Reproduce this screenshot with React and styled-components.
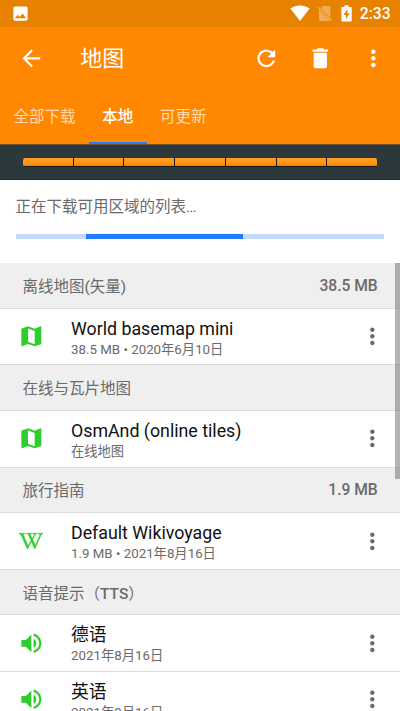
import React from 'react';
import styled, { createGlobalStyle } from 'styled-components';
import {
  MdArrowBack,
  MdDelete,
  MdImage,
  MdMap,
  MdMoreVert,
  MdRefresh,
  MdVolumeUp,
} from 'react-icons/md';
import { FaWikipediaW } from 'react-icons/fa';

const colors = {
  statusBar: '#e68200',
  primary: '#ff8800',
  accent: '#237bff',
  accentLight: '#c4daff',
  dark: '#2d383d',
  header: '#efefef',
  divider: '#dadada',
  text: '#111111',
  textSecondary: '#6a6a6a',
  green: '#2fce2f',
};

const GlobalStyle = createGlobalStyle`
  * {
    box-sizing: border-box;
  }

  body {
    margin: 0;
    overflow: hidden;
    background: #ffffff;
    font-family: Roboto, 'Noto Sans CJK SC', sans-serif;
  }

  svg {
    display: block;
    flex-shrink: 0;
  }
`;

const Screen = styled.div`
  width: 400px;
  height: 711px;
  display: flex;
  flex-direction: column;
  overflow: hidden;
  background: #ffffff;
`;

const StatusBar = styled.div`
  height: 27px;
  flex-shrink: 0;
  display: flex;
  align-items: center;
  justify-content: space-between;
  padding: 0 9.5px 0 10.5px;
  background: ${colors.statusBar};
  color: #ffffff;
`;

const StatusIcons = styled.div`
  display: flex;
  align-items: center;
`;

const StatusGap = styled.span`
  width: ${props => (props.$wide ? '9px' : '7px')};
`;

const Clock = styled.span`
  margin-left: 8px;
  padding-top: 1px;
  font-size: 15.6px;
  font-weight: 500;
  line-height: 26px;
`;

const Toolbar = styled.header`
  height: 62px;
  flex-shrink: 0;
  display: flex;
  align-items: center;
  padding: 0 13.4px 0 17.6px;
  background: ${colors.primary};
  color: #ffffff;
`;

const Title = styled.h1`
  flex: 1;
  margin: 0 0 0 36px;
  padding-top: 1px;
  font-size: 22px;
  font-weight: 400;
  line-height: 30px;
`;

const Actions = styled.div`
  display: flex;
  align-items: center;
  gap: 26.6px;
`;

const Tabs = styled.nav`
  height: 55px;
  flex-shrink: 0;
  display: flex;
  background: ${colors.primary};
`;

const Tab = styled.div`
  display: flex;
  align-items: center;
  justify-content: center;
  padding: 0 13.4px 1px;
  border-bottom: 2px solid ${props => (props.$active ? colors.accent : 'transparent')};
  color: ${props => (props.$active ? '#ffffff' : 'rgba(255, 255, 255, 0.7)')};
  font-size: 15.5px;
  font-weight: ${props => (props.$active ? 500 : 400)};
`;

const MemoryBar = styled.div`
  height: 36px;
  flex-shrink: 0;
  display: flex;
  align-items: center;
  padding: 0 23px;
  background: ${colors.dark};
  border-top: 1px solid #6a5030;
  border-bottom: 1px solid #20282c;
`;

const MemoryTrack = styled.div`
  flex: 1;
  height: 9px;
  display: flex;
  gap: 1px;
  overflow: hidden;
  border-radius: 2px;
  background: #15191b;
`;

const MemorySegment = styled.div`
  flex: 1;
  height: 8px;
  background: linear-gradient(#ff9e22, #ff8f0e 85%, #d07a12);
`;

const Download = styled.section`
  height: 83.2px;
  flex-shrink: 0;
  display: flex;
  flex-direction: column;
  padding: 15px 15.6px 0;
`;

const DownloadText = styled.div`
  color: ${colors.textSecondary};
  font-size: 15.5px;
  line-height: 24px;
`;

const Progress = styled.div`
  height: 5px;
  margin-top: 15px;
  padding-left: 70.4px;
  background: ${colors.accentLight};
`;

const ProgressValue = styled.div`
  width: 157px;
  height: 5px;
  background: ${colors.accent};
`;

const List = styled.main`
  position: relative;
  flex: 1;
  min-height: 0;
  overflow: hidden;
`;

const ScrollThumb = styled.div`
  position: absolute;
  top: 0;
  right: 0;
  width: 5px;
  height: 216px;
  background: rgba(90, 90, 90, 0.45);
`;

const SectionHeader = styled.div`
  height: 45.5px;
  display: flex;
  align-items: center;
  justify-content: space-between;
  padding: 0 22.3px 0 22.5px;
  background: ${colors.header};
  border-bottom: 1px solid ${colors.divider};
  color: ${colors.textSecondary};
  font-size: 15.5px;
`;

const SectionName = styled.span`
  padding-bottom: 1px;
`;

const SectionSize = styled.span`
  padding-top: 1px;
  font-size: 15.6px;
  font-weight: 500;
`;

const Latin = styled.span`
  font-weight: 500;
`;

const Row = styled.div`
  height: 56.7px;
  display: flex;
  align-items: center;
  padding: 0 14.7px 0 18px;
  background: #ffffff;
  border-bottom: 1px solid ${colors.divider};
  color: ${colors.textSecondary};
`;

const RowIcon = styled.div`
  width: 26.7px;
  display: flex;
  justify-content: center;
  color: ${colors.green};
`;

const RowText = styled.div`
  flex: 1;
  margin-left: 26.3px;
  padding-top: 3px;
`;

const RowTitle = styled.div`
  color: ${colors.text};
  font-size: 17.8px;
  line-height: 22px;
`;

const RowInfo = styled.div`
  font-size: 13.3px;
  line-height: 19px;
  white-space: nowrap;
`;

// the stock glyph is too thin at this size
const WikiIcon = styled(FaWikipediaW)`
  stroke: currentColor;
  stroke-width: 14px;
`;

const ICON_SIZE = 26.7;

const sections = [
  {
    id: 'offline',
    name: '离线地图(矢量)',
    size: '38.5 MB',
    items: [{ icon: 'map', title: 'World basemap mini', info: '38.5 MB • 2020年6月10日' }],
  },
  {
    id: 'tiles',
    name: '在线与瓦片地图',
    items: [{ icon: 'map', title: 'OsmAnd (online tiles)', info: '在线地图' }],
  },
  {
    id: 'travel',
    name: '旅行指南',
    size: '1.9 MB',
    items: [{ icon: 'wiki', title: 'Default Wikivoyage', info: '1.9 MB • 2021年8月16日' }],
  },
  {
    id: 'tts',
    name: <>语音提示（<Latin>TTS</Latin>）</>,
    items: [
      { icon: 'voice', title: '德语', info: '2021年8月16日' },
      { icon: 'voice', title: '英语', info: '2021年8月16日' },
    ],
  },
];

const icons = {
  map: <MdMap size={ICON_SIZE} />,
  wiki: <WikiIcon size={24} />,
  voice: <MdVolumeUp size={ICON_SIZE} />,
};

const WifiIcon = () => (
  <svg width="20" height="17" viewBox="0 0 20 17">
    <path d="M.4 3.6C3 1.6 6.3.5 10 .5s7 1.1 9.6 3.1L10 16z" fill="#fff" />
  </svg>
);

const NoSimIcon = () => (
  <svg width="15" height="17" viewBox="0 0 15 17">
    <path d="M6 1h6.5q.8 0 .8.8V16H3q-1 0-1-1V5z" fill="#fff" opacity="0.35" />
    <path d="M.8 1.8l13.5 13.7" stroke={colors.statusBar} strokeWidth="2.6" />
    <path d="M.8 1.8l13.5 13.7" stroke="#fff" strokeWidth="1.1" opacity="0.45" />
  </svg>
);

const BatteryIcon = () => (
  <svg width="11" height="17" viewBox="0 0 11 17">
    <path
      d="M3.5.3h4V2H10q.7 0 .7.7v13q0 .8-.8.8H1.2q-.8 0-.8-.8v-13Q.4 2 1.200 2h2.300z"
      fill="#fff"
    />
    <path d="M6.3 4L2.5 10h2.400v4.500L8.600 8.300H6.300z" fill={colors.statusBar} />
  </svg>
);

const SectionBlock = ({ section }) => (
  <>
    <SectionHeader>
      <SectionName>{section.name}</SectionName>
      {section.size && <SectionSize>{section.size}</SectionSize>}
    </SectionHeader>
    {section.items.map(item => (
      <Row key={item.title}>
        <RowIcon>{icons[item.icon]}</RowIcon>
        <RowText>
          <RowTitle>{item.title}</RowTitle>
          <RowInfo>{item.info}</RowInfo>
        </RowText>
        <MdMoreVert size={ICON_SIZE} />
      </Row>
    ))}
  </>
);

const App = () => {
  const tabs = ['全部下载', '本地', '可更新'];

  return (
    <>
      <GlobalStyle />
      <Screen>
        <StatusBar>
          <MdImage size={19} />
          <StatusIcons>
            <WifiIcon />
            <StatusGap />
            <NoSimIcon />
            <StatusGap $wide />
            <BatteryIcon />
            <Clock>2:33</Clock>
          </StatusIcons>
        </StatusBar>

        <Toolbar>
          <MdArrowBack size={ICON_SIZE} />
          <Title>地图</Title>
          <Actions>
            <MdRefresh size={ICON_SIZE} />
            <MdDelete size={ICON_SIZE} />
            <MdMoreVert size={ICON_SIZE} />
          </Actions>
        </Toolbar>

        <Tabs>
          {tabs.map(tab => (
            <Tab key={tab} $active={tab === '本地'}>{tab}</Tab>
          ))}
        </Tabs>

        <MemoryBar>
          <MemoryTrack>
            {Array.from({ length: 7 }, (_, i) => <MemorySegment key={i} />)}
          </MemoryTrack>
        </MemoryBar>

        <Download>
          <DownloadText>正在下载可用区域的列表…</DownloadText>
          <Progress>
            <ProgressValue />
          </Progress>
        </Download>

        <List>
          {sections.map(section => (
            <SectionBlock key={section.id} section={section} />
          ))}
          <ScrollThumb />
        </List>
      </Screen>
    </>
  );
};

export default App;
